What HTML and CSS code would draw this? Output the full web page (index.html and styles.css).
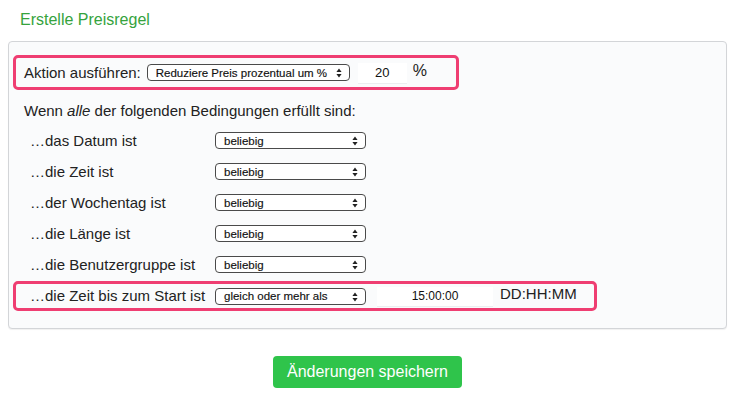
FILE: index.html
```html
<!DOCTYPE html>
<html lang="de">
<head>
<meta charset="utf-8">
<title>Erstelle Preisregel</title>
<link rel="stylesheet" href="styles.css">
</head>
<body>
<div class="page">
  <h1 class="title">Erstelle Preisregel</h1>
  <div class="panel">
    <div class="hl hl-action">
      <span class="lbl-action">Aktion ausführen:</span>
      <div class="sel sel-action">
        <span class="sel-text">Reduziere Preis prozentual um %</span>
        <svg class="arrows" width="6" height="10" viewBox="0 0 6 10"><path d="M3 0.5 L5.6 4 H0.4 Z M3 9.5 L5.6 6 H0.4 Z" fill="#222"/></svg>
      </div>
      <div class="field field-pct">20</div>
      <span class="unit">%</span>
    </div>
    <div class="intro">Wenn <em>alle</em> der folgenden Bedingungen erfüllt sind:</div>
    <div class="cond">
      <span class="cond-lbl">…das Datum ist</span>
      <div class="sel sel-cond"><span class="sel-text">beliebig</span><svg class="arrows" width="6" height="10" viewBox="0 0 6 10"><path d="M3 0.5 L5.6 4 H0.4 Z M3 9.5 L5.6 6 H0.4 Z" fill="#222"/></svg></div>
    </div>
    <div class="cond">
      <span class="cond-lbl">…die Zeit ist</span>
      <div class="sel sel-cond"><span class="sel-text">beliebig</span><svg class="arrows" width="6" height="10" viewBox="0 0 6 10"><path d="M3 0.5 L5.6 4 H0.4 Z M3 9.5 L5.6 6 H0.4 Z" fill="#222"/></svg></div>
    </div>
    <div class="cond">
      <span class="cond-lbl">…der Wochentag ist</span>
      <div class="sel sel-cond"><span class="sel-text">beliebig</span><svg class="arrows" width="6" height="10" viewBox="0 0 6 10"><path d="M3 0.5 L5.6 4 H0.4 Z M3 9.5 L5.6 6 H0.4 Z" fill="#222"/></svg></div>
    </div>
    <div class="cond">
      <span class="cond-lbl">…die Länge ist</span>
      <div class="sel sel-cond"><span class="sel-text">beliebig</span><svg class="arrows" width="6" height="10" viewBox="0 0 6 10"><path d="M3 0.5 L5.6 4 H0.4 Z M3 9.5 L5.6 6 H0.4 Z" fill="#222"/></svg></div>
    </div>
    <div class="cond">
      <span class="cond-lbl">…die Benutzergruppe ist</span>
      <div class="sel sel-cond"><span class="sel-text">beliebig</span><svg class="arrows" width="6" height="10" viewBox="0 0 6 10"><path d="M3 0.5 L5.6 4 H0.4 Z M3 9.5 L5.6 6 H0.4 Z" fill="#222"/></svg></div>
    </div>
    <div class="hl hl-start">
      <span class="cond-lbl">…die Zeit bis zum Start ist</span>
      <div class="sel sel-cond"><span class="sel-text">gleich oder mehr als</span><svg class="arrows" width="6" height="10" viewBox="0 0 6 10"><path d="M3 0.5 L5.6 4 H0.4 Z M3 9.5 L5.6 6 H0.4 Z" fill="#222"/></svg></div>
      <div class="field field-time">15:00:00</div>
      <span class="fmt">DD:HH:MM</span>
    </div>
  </div>
  <div class="actions">
    <button class="btn-save" type="button">Änderungen speichern</button>
  </div>
</div>
</body>
</html>
```
FILE: styles.css
```css
* { box-sizing: border-box; }
html, body { margin: 0; padding: 0; background: #ffffff; }
body {
  font-family: "Liberation Sans", Arial, Helvetica, sans-serif;
  color: #222;
  font-size: 15px;
}
.page {
  width: 736px;
  padding: 0 9px 0 8px;
}
.title {
  margin: 0;
  padding: 10px 0 0 12px;
  height: 41px;
  font-size: 16px;
  line-height: 19px;
  font-weight: normal;
  color: #35a33d;
}
.panel {
  border: 1px solid #d3d5d8;
  border-radius: 4px;
  background: #fafbfc;
  padding: 13px 4px 17px 4px;
  box-shadow: 0 1px 1px rgba(0,0,0,0.06);
}
.hl {
  border: 3px solid #ef3e72;
  border-radius: 5px;
  display: flex;
  align-items: center;
  background: #fafbfc;
}
.hl-action {
  width: 446px;
  height: 35px;
  padding-left: 8px;
}
.lbl-action {
  font-size: 15px;
  line-height: 18px;
  margin-right: 6px;
}
.sel {
  position: relative;
  display: flex;
  align-items: center;
  height: 17px;
  border: 1px solid #4a4a4a;
  border-radius: 4px;
  background: #ffffff;
  padding-left: 8px;
  font-size: 11.5px;
  color: #111;
  -webkit-text-stroke: 0.15px #111;
  flex: none;
}
.sel-text { line-height: 14px; }
.arrows {
  position: absolute;
  right: 7px;
  top: 3px;
}
.sel-action { width: 203px; }
.sel-cond { width: 151px; }
.field {
  background: #ffffff;
  height: 20px;
  display: flex;
  align-items: center;
  justify-content: center;
  font-size: 12px;
  color: #111;
  box-shadow: 0 1px 0 #eceef0;
  flex: none;
}
.field-pct {
  width: 49px;
  margin-left: 8px;
  font-size: 13px;
}
.unit {
  margin-left: 6px;
  font-size: 16px;
  line-height: 18px;
  position: relative;
  top: -2px;
}
.intro {
  margin: 11px 0 4px 11px;
  line-height: 20px;
  font-size: 15px;
}
.cond {
  display: flex;
  align-items: center;
  height: 31px;
  padding-left: 17px;
}
.cond-lbl {
  width: 185px;
  font-size: 15px;
  line-height: 18px;
  flex: none;
}
.hl-start {
  width: 584px;
  height: 30px;
  margin-top: 1px;
  padding-left: 14px;
}
.field-time {
  width: 116px;
  margin-left: 11px;
  height: 19px;
}
.fmt {
  margin-left: 7px;
  font-size: 15px;
  line-height: 18px;
  position: relative;
  top: -2px;
}
.actions {
  display: flex;
  justify-content: center;
  padding-top: 27px;
}
.btn-save {
  width: 189px;
  height: 32px;
  border: none;
  border-radius: 4px;
  background: #2fc44b;
  color: #ffffff;
  font-family: "Liberation Sans", Arial, Helvetica, sans-serif;
  font-size: 16px;
  padding: 0;
  cursor: pointer;
}
```
